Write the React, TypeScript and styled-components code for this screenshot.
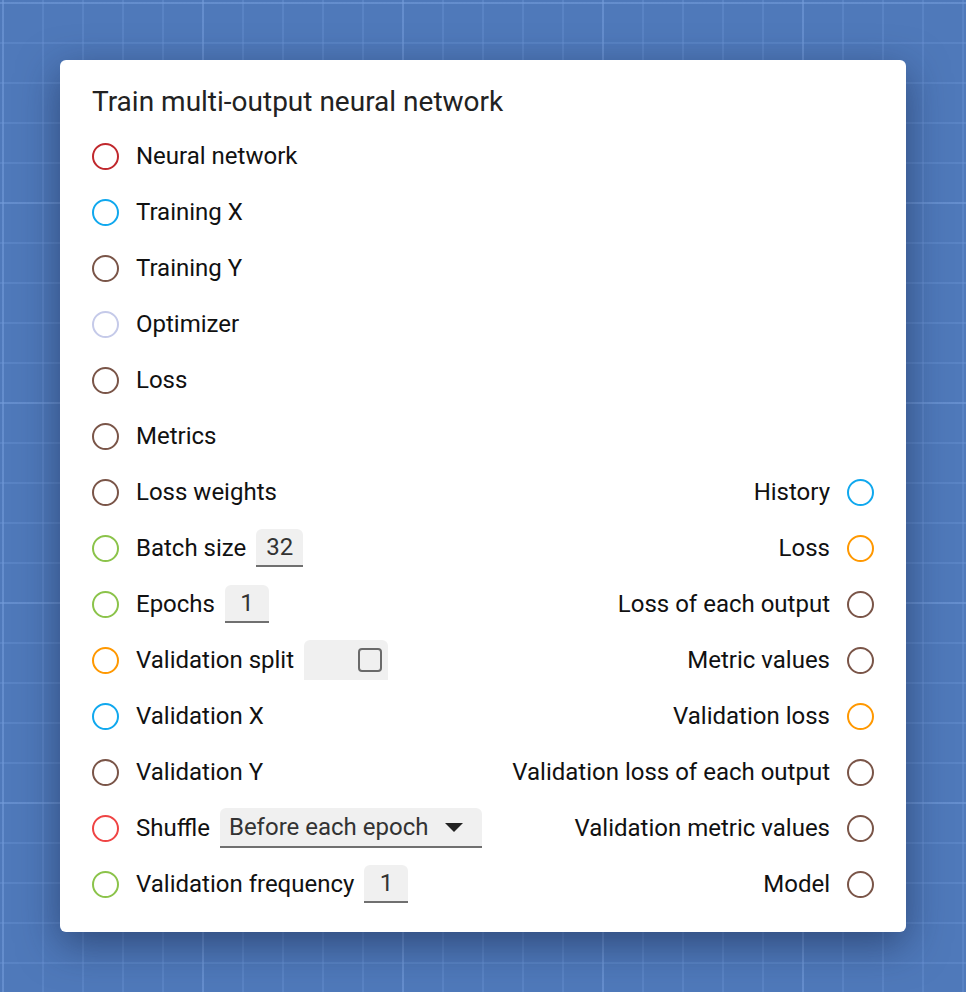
import React from "react";
import styled, { createGlobalStyle } from "styled-components";

const Global = createGlobalStyle`
  html, body { margin: 0; padding: 0; }
  body {
    width: 966px;
    height: 992px;
    overflow: hidden;
    font-family: Roboto, "Noto Sans", sans-serif;
    background-color: #4f79ba;
    background-image:
      linear-gradient(to right, rgba(120,160,220,0.35) 2px, transparent 2px),
      linear-gradient(to bottom, rgba(120,160,220,0.35) 2px, transparent 2px),
      linear-gradient(to right, rgba(110,150,215,0.35) 2px, transparent 2px),
      linear-gradient(to bottom, rgba(110,150,215,0.35) 2px, transparent 2px);
    background-size: 200px 200px, 200px 200px, 40px 40px, 40px 40px;
    background-position: 2px 2px, 2px 2px, 2px 2px, 2px 2px;
  }
`;

const Stage = styled.div`
  padding: 60px;
  display: flex;
`;

const Card = styled.div`
  width: 846px;
  box-sizing: border-box;
  background: #ffffff;
  border-radius: 6px;
  padding: 26px 32px 20px 32px;
  box-shadow: 0 12px 40px rgba(20, 35, 70, 0.55);
`;

const Title = styled.div`
  font-size: 28px;
  line-height: 32px;
  color: #222222;
  margin-bottom: 10px;
`;

const Columns = styled.div`
  display: flex;
  justify-content: space-between;
`;

const Column = styled.div<{ $right?: boolean }>`
  display: flex;
  flex-direction: column;
  justify-content: flex-end;
  align-items: ${(p) => (p.$right ? "flex-end" : "flex-start")};
`;

const Row = styled.div<{ $right?: boolean }>`
  height: 56px;
  display: flex;
  align-items: center;
  flex-direction: ${(p) => (p.$right ? "row-reverse" : "row")};
`;

const Socket = styled.span<{ $color: string }>`
  width: 23px;
  height: 23px;
  border: 2px solid ${(p) => p.$color};
  border-radius: 50%;
  flex: none;
`;

const Label = styled.span<{ $right?: boolean }>`
  font-size: 24px;
  color: #111111;
  ${(p) => (p.$right ? "margin-right: 17px;" : "margin-left: 17px;")}
  white-space: nowrap;
`;

const NumberBox = styled.div`
  margin-left: 10px;
  height: 38px;
  min-width: 44px;
  box-sizing: border-box;
  padding: 0 10px;
  display: flex;
  align-items: center;
  justify-content: center;
  background: #f0f0f0;
  border-radius: 6px 6px 0 0;
  border-bottom: 2px solid #707070;
  font-size: 24px;
  color: #333333;
`;

const SplitBox = styled.div`
  margin-left: 10px;
  width: 84px;
  height: 40px;
  box-sizing: border-box;
  background: #f0f0f0;
  border-radius: 6px 6px 0 0;
  display: flex;
  align-items: flex-start;
  justify-content: flex-end;
  padding: 8px 6px 0 0;
`;

const CheckBox = styled.span`
  width: 24px;
  height: 24px;
  box-sizing: border-box;
  border: 2px solid #6a6a6a;
  border-radius: 4px;
`;

const Select = styled.div`
  margin-left: 10px;
  width: 262px;
  height: 40px;
  box-sizing: border-box;
  padding: 0 19px 0 9px;
  display: flex;
  align-items: center;
  justify-content: space-between;
  background: #f0f0f0;
  border-radius: 6px 6px 0 0;
  border-bottom: 2px solid #707070;
  font-size: 24px;
  color: #333333;
`;

const Caret = styled.span`
  width: 0;
  height: 0;
  border-left: 9px solid transparent;
  border-right: 9px solid transparent;
  border-top: 9px solid #222222;
`;

type In = {
  label: string;
  color: string;
  control?: React.ReactNode;
};

const C = {
  red: "#c0282d",
  blue: "#10a8ee",
  brown: "#7a5548",
  lavender: "#c5cae9",
  green: "#8bc34a",
  orange: "#ff9800",
  lightRed: "#ef4444",
};

const inputs: In[] = [
  { label: "Neural network", color: C.red },
  { label: "Training X", color: C.blue },
  { label: "Training Y", color: C.brown },
  { label: "Optimizer", color: C.lavender },
  { label: "Loss", color: C.brown },
  { label: "Metrics", color: C.brown },
  { label: "Loss weights", color: C.brown },
  { label: "Batch size", color: C.green, control: <NumberBox>32</NumberBox> },
  { label: "Epochs", color: C.green, control: <NumberBox>1</NumberBox> },
  {
    label: "Validation split",
    color: C.orange,
    control: (
      <SplitBox>
        <CheckBox />
      </SplitBox>
    ),
  },
  { label: "Validation X", color: C.blue },
  { label: "Validation Y", color: C.brown },
  {
    label: "Shuffle",
    color: C.lightRed,
    control: (
      <Select>
        <span>Before each epoch</span>
        <Caret />
      </Select>
    ),
  },
  { label: "Validation frequency", color: C.green, control: <NumberBox>1</NumberBox> },
];

const outputs: In[] = [
  { label: "History", color: C.blue },
  { label: "Loss", color: C.orange },
  { label: "Loss of each output", color: C.brown },
  { label: "Metric values", color: C.brown },
  { label: "Validation loss", color: C.orange },
  { label: "Validation loss of each output", color: C.brown },
  { label: "Validation metric values", color: C.brown },
  { label: "Model", color: C.brown },
];

export default function App() {
  return (
    <>
      <Global />
      <Stage>
        <Card>
          <Title>Train multi-output neural network</Title>
          <Columns>
            <Column>
              {inputs.map((i) => (
                <Row key={i.label}>
                  <Socket $color={i.color} />
                  <Label>{i.label}</Label>
                  {i.control}
                </Row>
              ))}
            </Column>
            <Column $right>
              {outputs.map((o) => (
                <Row $right key={o.label}>
                  <Socket $color={o.color} />
                  <Label $right>{o.label}</Label>
                </Row>
              ))}
            </Column>
          </Columns>
        </Card>
      </Stage>
    </>
  );
}
